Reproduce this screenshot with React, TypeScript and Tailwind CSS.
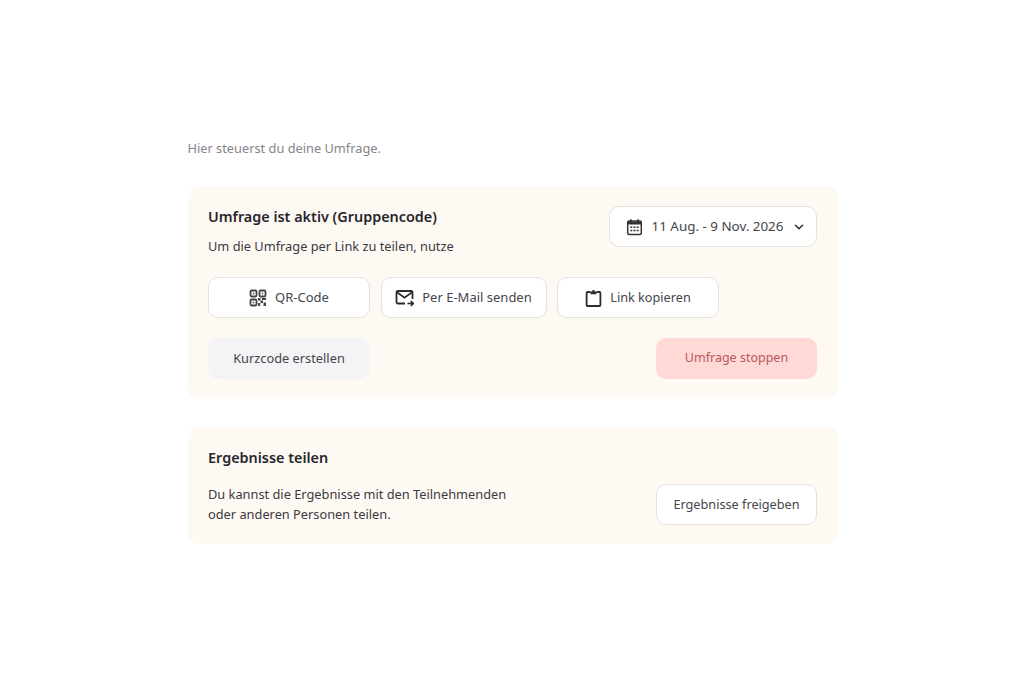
import { ReactNode } from "react";
import { ChevronDown } from "lucide-react";

const CalendarIcon = () => (
  <svg width="17" height="18" viewBox="0 0 17 18" fill="none" className="shrink-0">
    <rect x="1.7" y="3" width="13.6" height="13.5" rx="1.5" stroke="#333" strokeWidth="1.5" />
    <path d="M1.7 3.5h13.6v3H1.7z" fill="#333" />
    <path d="M5 1.2v3M12 1.2v3" stroke="#333" strokeWidth="1.5" />
    <path d="M4.3 8.5h2v1.5h-2zM7.5 8.5h2v1.5h-2zM10.7 8.5h2v1.5h-2zM4.3 11.7h2v1.5h-2zM7.5 11.7h2v1.5h-2zM10.7 11.7h2v1.5h-2z" fill="#333" />
  </svg>
);

const QrIcon = () => (
  <svg width="18" height="18" viewBox="0 0 18 18" fill="none" className="shrink-0">
    <rect x="1.5" y="1.5" width="6" height="6" rx="1.2" stroke="#444" strokeWidth="1.8" />
    <rect x="10.5" y="1.5" width="6" height="6" rx="1.2" stroke="#444" strokeWidth="1.8" />
    <rect x="1.5" y="10.5" width="6" height="6" rx="1.2" stroke="#444" strokeWidth="1.8" />
    <path
      d="M3.8 3.8h1.4v1.4H3.8zM12.8 3.8h1.4v1.4h-1.4zM3.8 12.8h1.4v1.4H3.8zM9 9h2.5v2.5H9zM13 9h4v2h-4zM11.5 11.5H14V14h-2.5zM14.5 13.5h2.5V17h-2.5zM9 14h2.2v3H9z"
      fill="#444"
    />
  </svg>
);

const MailIcon = () => (
  <svg width="19" height="18" viewBox="0 0 19 18" fill="none" className="shrink-0">
    <path d="M10 14.5H2.8a1.3 1.3 0 0 1-1.3-1.3V3.3A1.3 1.3 0 0 1 2.8 2h13.4a1.3 1.3 0 0 1 1.3 1.3V10" stroke="#2b2b2b" strokeWidth="1.8" />
    <path d="M2 3.2l7.5 5.6L17 3.2" stroke="#2b2b2b" strokeWidth="1.7" />
    <path d="M12.5 14.5h5.5M15.8 12.2l2.4 2.3-2.4 2.3" stroke="#2b2b2b" strokeWidth="1.7" />
  </svg>
);

const ClipboardIcon = () => (
  <svg width="17" height="18" viewBox="0 0 17 18" fill="none" className="shrink-0">
    <path d="M5.5 3H2.6a1 1 0 0 0-1 1v12a1 1 0 0 0 1 1h11.8a1 1 0 0 0 1-1V4a1 1 0 0 0-1-1h-2.9" stroke="#2b2b2b" strokeWidth="1.8" />
    <path d="M5.5 2.4h1.7a1.3 1.3 0 0 1 2.6 0h1.7V5.2h-6z" fill="#2b2b2b" />
  </svg>
);

const Button = ({ className, children }: { className: string; children: ReactNode }) => (
  <button className={`flex h-[41px] items-center justify-center gap-2 rounded-[10px] ${className}`}>
    {children}
  </button>
);

const outline = "border border-[#e4e2df] bg-white text-[#44444a]";

export default function App() {
  return (
    <div className="min-h-screen bg-white pt-[139px] pl-[187.5px] font-['Noto_Sans',sans-serif] text-[12.8px] text-[#3a3a40]">
      <div className="w-[650px]">
        <p className="leading-[18px] text-[#85858a]">Hier steuerst du deine Umfrage.</p>

        <section className="mt-[29px] rounded-[10px] bg-[#fff9f4] px-[20.5px] py-[20px]">
          <div className="flex items-start justify-between">
            <div>
              <h2 className="mt-[1px] text-[14.4px] font-semibold leading-[20px] text-[#26262b]">Umfrage ist aktiv (Gruppencode)</h2>
              <p className="mt-[10px] leading-[18px]">Um die Umfrage per Link zu teilen, nutze</p>
            </div>
            <Button className={`${outline} w-[208px] pl-[6px] text-[13.4px]`}>
              <CalendarIcon />
              <span className="ml-[1px]">11 Aug. - 9 Nov. 2026</span>
              <ChevronDown size={14} strokeWidth={2.5} className="ml-[1px] text-[#2b2b2b]" />
            </Button>
          </div>

          <div className="mt-[22px] flex gap-[10.5px] text-[13px]">
            <Button className={`${outline} w-[162px]`}>
              <QrIcon />
              QR-Code
            </Button>
            <Button className={`${outline} w-[166px]`}>
              <MailIcon />
              Per E-Mail senden
            </Button>
            <Button className={`${outline} w-[162px]`}>
              <ClipboardIcon />
              <span className="text-[12.7px]">Link kopieren</span>
            </Button>
          </div>

          <div className="mt-[20px] flex justify-between">
            <Button className="w-[162px] bg-[#f4f4f6] text-[#44444a]">Kurzcode erstellen</Button>
            <Button className="w-[161px] bg-[#ffd9d6] text-[12.5px] text-[#b9585a]">Umfrage stoppen</Button>
          </div>
        </section>

        <section className="mt-[28px] rounded-[10px] bg-[#fff9f4] px-[20.5px] pt-[21px] pb-[19px]">
          <h2 className="text-[14.4px] font-semibold leading-[20px] text-[#26262b]">Ergebnisse teilen</h2>
          <div className="mt-[16px] flex items-start justify-between">
            <p className="leading-[20px]">
              Du kannst die Ergebnisse mit den Teilnehmenden
              <br />
              oder anderen Personen teilen.
            </p>
            <Button className={`${outline} w-[161px] text-[12.7px]`}>Ergebnisse freigeben</Button>
          </div>
        </section>
      </div>
    </div>
  );
}
